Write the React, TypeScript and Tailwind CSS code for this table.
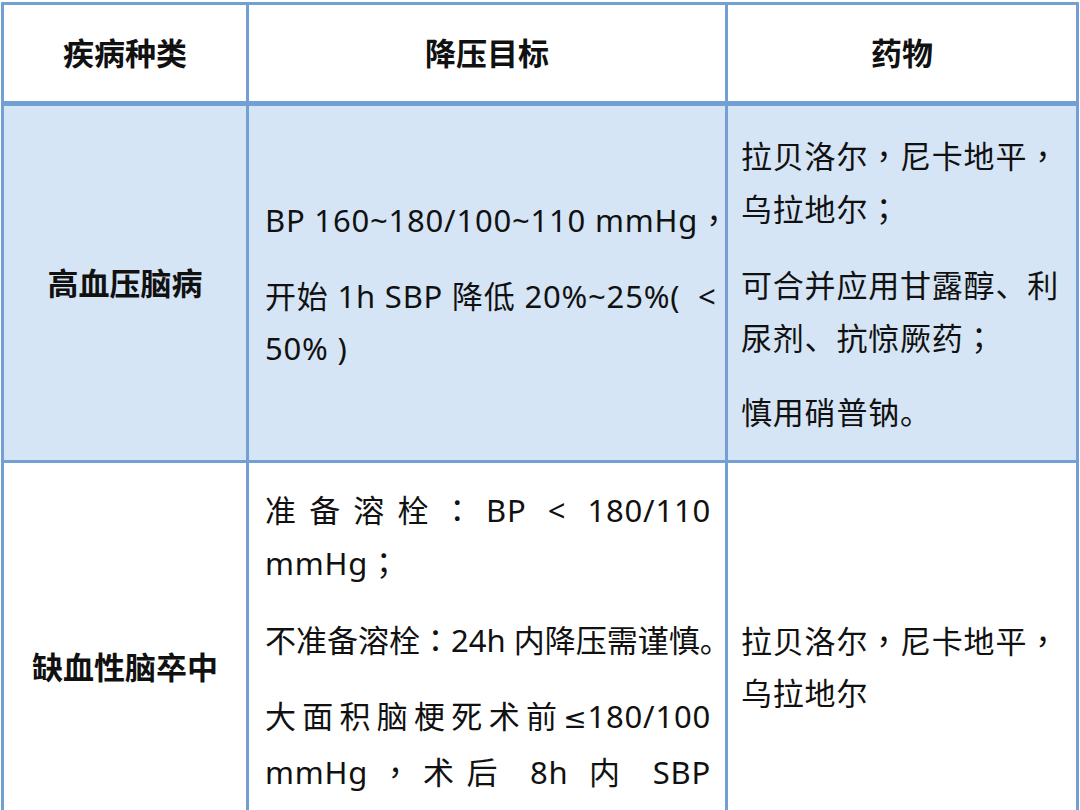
import React from "react";

function J({ children }: { children: React.ReactNode }) {
  return <div className="whitespace-nowrap text-justify [text-align-last:justify]">{children}</div>;
}
function L({ children }: { children: React.ReactNode }) {
  return <div className="whitespace-nowrap">{children}</div>;
}
function P({ c }: { c: string }) {
  return <span className="font-['Noto_Sans_CJK_TC',sans-serif]">{c}</span>;
}

export default function App() {
  const bd = "border-[3px] border-[#72a0d5]";
  return (
    <div className="w-[1080px] h-[810px] overflow-hidden bg-white pt-[2px] pl-[1px] font-['Noto_Sans','Noto_Sans_CJK_SC',sans-serif]">
      <table className="table-fixed border-collapse w-[1075px] text-[31px] leading-[52px] text-[#111]">
        <colgroup>
          <col className="w-[245px]" />
          <col className="w-[479px]" />
          <col className="w-[351px]" />
        </colgroup>
        <tbody>
          <tr className="h-[100px]">
            <th className={`${bd} border-b-[5px] font-bold text-center align-middle`}>疾病种类</th>
            <th className={`${bd} border-b-[5px] font-bold text-center align-middle`}>降压目标</th>
            <th className={`${bd} border-b-[5px] font-bold text-center align-middle`}>药物</th>
          </tr>
          <tr className="h-[358px] bg-[#d5e5f5]">
            <td className={`${bd} font-bold text-center align-middle`}>高血压脑病</td>
            <td className={`${bd} align-middle pl-[16px] pr-[10px] tracking-[0.8px]`}>
              <div className="mb-[24px]"><L>BP 160~180/100~110 mmHg<P c="，" /></L></div>
              <div>
                <L>开始 1h SBP 降低 20%~25%(&nbsp;&nbsp;&lt;</L>
                <L>50% )</L>
              </div>
            </td>
            <td className={`${bd} align-middle pl-[13px] pr-[6px] tracking-[0.8px]`}>
              <div className="mb-[24px]">
                <L>拉贝洛尔<P c="，" />尼卡地平<P c="，" /></L>
                <L>乌拉地尔<P c="；" /></L>
              </div>
              <div className="mb-[22px]">
                <L>可合并应用甘露醇、利</L>
                <L>尿剂、抗惊厥药<P c="；" /></L>
              </div>
              <div>
                <L>慎用硝普钠。</L>
              </div>
            </td>
          </tr>
          <tr className="h-[410px]">
            <td className={`${bd} font-bold text-center align-middle`}>缺血性脑卒中</td>
            <td className={`${bd} align-middle pl-[16px] pr-[14px] tracking-[0.8px]`}>
              <div className="mb-[24px]">
                <J>准备溶栓<P c="：" />BP &lt; 180/110</J>
                <L>mmHg<P c="；" /></L>
              </div>
              <div className="mb-[24px] tracking-normal">
                <L>不准备溶栓<P c="：" />24h 内降压需谨慎。</L>
              </div>
              <div>
                <J>大面积脑梗死术前<span className="font-['DejaVu_Sans',sans-serif] text-[28px]">≤</span>180/100</J>
                <J>mmHg<P c="，" />术后 8h 内 SBP</J>
                <L>140~160 mmHg</L>
              </div>
            </td>
            <td className={`${bd} align-middle pl-[13px] pr-[6px] tracking-[0.8px]`}>
              <L>拉贝洛尔<P c="，" />尼卡地平<P c="，" /></L>
              <L>乌拉地尔</L>
            </td>
          </tr>
        </tbody>
      </table>
    </div>
  );
}
